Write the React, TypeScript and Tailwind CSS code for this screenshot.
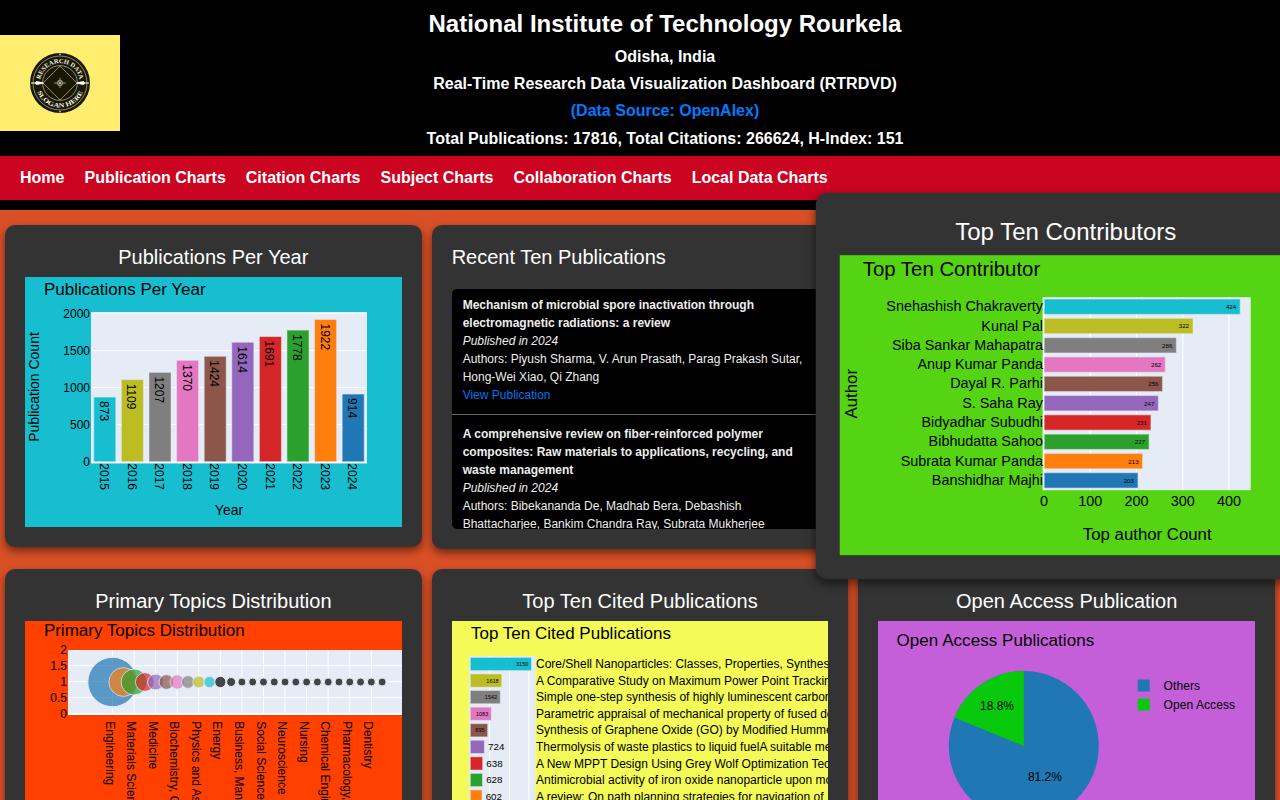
import React from "react";

const FONT = "'Liberation Sans', Arial, sans-serif";
const PALETTE = ["#17becf", "#bcbd22", "#7f7f7f", "#e377c2", "#8c564b", "#9467bd", "#d62728", "#2ca02c", "#ff7f0e", "#1f77b4"];

const YEARS = [873, 1109, 1207, 1370, 1424, 1614, 1691, 1778, 1922, 914];

const CONTRIBUTORS: [string, number][] = [
  ["Snehashish Chakraverty", 424],
  ["Kunal Pal", 322],
  ["Siba Sankar Mahapatra", 286],
  ["Anup Kumar Panda", 262],
  ["Dayal R. Parhi", 256],
  ["S. Saha Ray", 247],
  ["Bidyadhar Subudhi", 231],
  ["Bibhudatta Sahoo", 227],
  ["Subrata Kumar Panda", 213],
  ["Banshidhar Majhi", 203],
];

const TOPICS = [
  "Engineering",
  "Materials Science",
  "Medicine",
  "Biochemistry, Genetics",
  "Physics and Astronomy",
  "Energy",
  "Business, Management",
  "Social Sciences",
  "Neuroscience",
  "Nursing",
  "Chemical Engineering",
  "Pharmacology, Toxicology",
  "Dentistry",
];

const BUBBLES: [number, string][] = [
  [24.7, "#1f77b4"],
  [14.4, "#ff7f0e"],
  [13, "#2ca02c"],
  [9.4, "#d62728"],
  [8, "#9467bd"],
  [7.4, "#8c564b"],
  [7.2, "#e377c2"],
  [6.4, "#7f7f7f"],
  [6, "#bcbd22"],
  [5.7, "#17becf"],
  [5.6, "#111111"],
  [4.5, "#111111"],
];

const CITED: [string, number][] = [
  ["Core/Shell Nanoparticles: Classes, Properties, Synthesis", 3150],
  ["A Comparative Study on Maximum Power Point Tracking", 1618],
  ["Simple one-step synthesis of highly luminescent carbon", 1542],
  ["Parametric appraisal of mechanical property of fused deposition", 1083],
  ["Synthesis of Graphene Oxide (GO) by Modified Hummers", 895],
  ["Thermolysis of waste plastics to liquid fuelA suitable method", 724],
  ["A New MPPT Design Using Grey Wolf Optimization Technique", 638],
  ["Antimicrobial activity of iron oxide nanoparticle upon modulation", 628],
  ["A review: On path planning strategies for navigation of", 602],
];

function Logo() {
  return (
    <svg className="mt-[35px] block h-24 w-[120px] shrink-0 bg-[#ffee6f]" viewBox="0 35 120 96">
      <defs>
        <path id="arcTop" d="M 40.1 83 A 19.9 19.9 0 0 1 79.9 83" />
        <path id="arcBottom" d="M 35.5 83 A 24.5 24.5 0 0 0 84.5 83" />
      </defs>
      <circle cx="60" cy="83" r="30" fill="#1a1805" />
      <g fill="none" stroke="#d8d4b4" strokeWidth="0.6">
        <circle cx="60" cy="83" r="27" />
        <circle cx="60" cy="83" r="17.4" />
        <path d="M60 66 77 83 60 100 43 83Z" />
      </g>
      <path d="M31 82.4 35 82.4 36.5 81 43.5 82.5V83.5L36.5 85 35 83.6 31 83.6ZM76.5 82.5 83.5 81 85 82.4 89 82.4V83.6L85 83.6 83.5 85 76.5 83.5Z" fill="#fff" />
      <g fill="none" stroke="#d8d6c8" strokeWidth="0.6">
        <circle cx="60" cy="83" r="2.8" />
        <path d="M60 78V88M54 83H66M58 81 62 85M62 81 58 85" />
      </g>
      <g fill="#fff">
        <circle cx="60" cy="54.3" r="0.8" />
        <circle cx="60" cy="111.7" r="0.8" />
      </g>
      <g fill="#f6f2e2" fontFamily="'Liberation Serif', serif" fontWeight="700" fontSize="6.4" textAnchor="middle">
        <text>
          <textPath href="#arcTop" startOffset="50%" textLength="55" lengthAdjust="spacingAndGlyphs">RESEARCH DATA</textPath>
        </text>
        <text>
          <textPath href="#arcBottom" startOffset="50%" textLength="58" lengthAdjust="spacingAndGlyphs">SLOGAN HERE</textPath>
        </text>
      </g>
    </svg>
  );
}

function YearChart() {
  return (
    <svg className="block h-[250px] w-full bg-[#17becf]" viewBox="25 277 376.67 250" preserveAspectRatio="none" fontFamily={FONT} fontSize="12">
      <text x="43.9" y="295" fontSize="17" textLength="161.8">Publications Per Year</text>
      <rect x="91" y="312" width="276" height="151.5" fill="#e5ecf6" />
      {[0, 500, 1000, 1500, 2000].map((t) => (
        <g key={t}>
          <rect x="91" y={461.6 - t * 0.074 - (t === 0 ? 0.6 : 0.5)} width="276" height={t === 0 ? 2 : 1} fill="#fff" />
          <text x="90" y={465.9 - t * 0.074} textAnchor="end">{t}</text>
        </g>
      ))}
      {YEARS.map((v, i) => {
        const c = 104.8 + i * 27.6;
        const top = 461.7 - v * 0.074;
        return (
          <g key={i}>
            <rect x={c - 11} y={top} width="22" height={v * 0.074} fill={PALETTE[i]} stroke="#e5ecf6" strokeWidth="1" strokeOpacity="0.5" />
            <text transform={`translate(${c - 5} ${top + 4}) rotate(90)`}>{v}</text>
            <text transform={`translate(${c - 4.8} 463.3) rotate(90)`}>{2015 + i}</text>
          </g>
        );
      })}
      <text x="229" y="515" fontSize="14" textAnchor="middle">Year</text>
      <text transform="translate(39.3 387) rotate(-90)" fontSize="14" textAnchor="middle">Publication Count</text>
    </svg>
  );
}

function ContributorChart() {
  return (
    <svg className="block h-[250px] w-full bg-[#55d414]" viewBox="840 255 452 300" preserveAspectRatio="none" fontFamily={FONT} fontSize="14.4">
      <text x="863" y="276" fontSize="20.4">Top Ten Contributor</text>
      <rect x="1043" y="297" width="208" height="193" fill="#e5ecf6" />
      {[0, 100, 200, 300, 400].map((t) => (
        <g key={t}>
          <rect x={1044.3 + t * 0.4625 - (t === 0 ? 1.2 : 0.6)} y="297" width={t === 0 ? 2.4 : 1.2} height="193" fill="#fff" />
          <text x={1044.3 + t * 0.4625} y="506" textAnchor="middle">{t}</text>
        </g>
      ))}
      {CONTRIBUTORS.map(([name, v], i) => {
        const c = 306.5 + i * 19.3;
        return (
          <g key={name}>
            <rect x="1044.4" y={c - 7.7} width={v * 0.4625} height="15.4" fill={PALETTE[i]} stroke="#e5ecf6" strokeWidth="1.2" strokeOpacity="0.5" />
            <text x="1043.2" y={c + 4.6} textAnchor="end">{name}</text>
            <text x={1044.4 + v * 0.4625 - 4} y={c + 2.5} textAnchor="end" fontSize="6.2">{v}</text>
          </g>
        );
      })}
      <text x="1147.5" y="540" fontSize="16.8" textAnchor="middle">Top author Count</text>
      <text transform="translate(857.3 393.5) rotate(-90)" fontSize="16.8" textAnchor="middle">Author</text>
    </svg>
  );
}

function TopicsChart() {
  const dots: [number, string][] = Array.from({ length: 26 }, (_, i) => BUBBLES[i] ?? [4, "#111111"]);
  return (
    <svg className="block h-[250px] w-full bg-[#ff4000]" viewBox="25 621 376.67 250" preserveAspectRatio="none" fontFamily={FONT} fontSize="12">
      <text x="43.9" y="636.4" fontSize="17" textLength="200.8">Primary Topics Distribution</text>
      <rect x="68" y="650" width="334" height="65" fill="#e5ecf6" />
      {[0, 0.5, 1, 1.5, 2].map((t) => (
        <g key={t}>
          {t < 2 && <rect x="68" y={713.7 - t * 32 - (t === 0 ? 0.7 : 0.5)} width="334" height={t === 0 ? 2 : 1} fill="#fff" />}
          <text x="67" y={718.2 - t * 32} textAnchor="end">{t}</text>
        </g>
      ))}
      {TOPICS.map((name, i) => (
        <g key={name}>
          <rect x={112 + i * 21.57} y="650" width="1" height="65" fill="#fff" />
          <text transform={`translate(${105.6 + i * 21.57} 721.3) rotate(90)`}>{name}</text>
        </g>
      ))}
      {dots.map(([r, fill], i) => (
        <circle key={i} cx={112.5 + i * 10.785} cy="682" r={r} fill={fill} stroke="#e5ecf6" strokeWidth="1" opacity={i < 10 ? 0.7 : 0.77} />
      ))}
    </svg>
  );
}

function CitedChart() {
  return (
    <svg className="block h-[250px] w-full bg-[#f4fa58]" viewBox="452 621 376.67 250" preserveAspectRatio="none" fontFamily={FONT} fontSize="12">
      <text x="471" y="639.2" fontSize="17">Top Ten Cited Publications</text>
      <rect x="469" y="656" width="66.5" height="165" fill="#e5ecf6" />
      {[489.2, 509, 528.3].map((x) => (
        <rect key={x} x={x} y="656" width="1" height="165" fill="#fff" />
      ))}
      {CITED.map(([name, v], i) => {
        const c = 664 + i * 16.57;
        const w = v * 0.0194;
        const inside = v > 800;
        return (
          <g key={name}>
            <rect x="470.3" y={c - 6.6} width={w} height="13.2" fill={PALETTE[i]} stroke="#e5ecf6" strokeWidth="1" strokeOpacity="0.5" />
            {inside ? (
              <text x={470.3 + w - 3.1} y={c + 2} fontSize="5.5" textAnchor="end">{v}</text>
            ) : (
              <text x={470.3 + w + 3.7} y={c + 3.5} fontSize="9.8">{v}</text>
            )}
            <text x="536" y={c + 4.2}>{name}</text>
          </g>
        );
      })}
    </svg>
  );
}

function AccessChart() {
  return (
    <svg className="block h-[250px] w-full bg-[#c55fd9]" viewBox="878 621 376.67 250" preserveAspectRatio="none" fontFamily={FONT} fontSize="12">
      <text x="896.6" y="646" fontSize="17" textLength="197.6">Open Access Publications</text>
      <circle cx="1023.8" cy="746" r="75" fill="#1f77b4" />
      <path d="M1023.8 746 954.4 717.6A75 75 0 0 1 1023.8 671Z" fill="#08c90c" />
      <text x="997" y="710" textAnchor="middle">18.8%</text>
      <text x="1044.9" y="781" textAnchor="middle">81.2%</text>
      <rect x="1137.7" y="679.5" width="12" height="12" fill="#1f77b4" />
      <rect x="1137.7" y="698.5" width="12" height="12" fill="#08c90c" />
      <text x="1163.6" y="690" textLength="36.4">Others</text>
      <text x="1163.6" y="709" textLength="71.4">Open Access</text>
    </svg>
  );
}

function Card({ title, className = "", children }: { title: string; className?: string; children: React.ReactNode }) {
  return (
    <section className={`rounded-[10px] bg-[#333333] p-5 shadow-[0_4px_8px_rgba(0,0,0,0.5)] ${className}`}>
      <h2 className="mb-2 text-center text-xl leading-6">{title}</h2>
      {children}
    </section>
  );
}

function Publication({ title, authors }: { title: string; authors: string }) {
  return (
    <li className="border-b border-[#666] px-[11px] pb-2.5 pt-2.5">
      <p className="font-bold">{title}</p>
      <p className="italic">Published in 2024</p>
      <p>Authors: {authors}</p>
      <a className="text-[#0074f0]">View Publication</a>
    </li>
  );
}

export default function App() {
  const links = ["Home", "Publication Charts", "Citation Charts", "Subject Charts", "Collaboration Charts", "Local Data Charts"];
  return (
    <div className="h-[800px] overflow-hidden bg-[#d95027] font-['Liberation_Sans',Arial,sans-serif] text-white">
      <header className="bg-black pb-2.5">
        <div className="flex h-[156px]">
          <Logo />
          <div className="mr-[70px] flex-1 pt-[9px] text-center text-base font-bold leading-[27.2px]">
            <h1 className="mb-[5px] text-2xl leading-[29px]">National Institute of Technology Rourkela</h1>
            <p>Odisha, India</p>
            <p>Real-Time Research Data Visualization Dashboard (RTRDVD)</p>
            <p className="text-[#007bff]">(Data Source: OpenAlex)</p>
            <p>Total Publications: 17816, Total Citations: 266624, H-Index: 151</p>
          </div>
        </div>
        <nav className="flex h-11 items-center gap-5 bg-[#ca0421] px-5 font-bold">
          {links.map((l) => (
            <a key={l}>{l}</a>
          ))}
        </nav>
      </header>

      <main className="grid grid-cols-3 items-start gap-x-2.5 gap-y-5 px-[5px] pt-[15px]">
        <Card title="Publications Per Year">
          <YearChart />
        </Card>

        <section className="rounded-[10px] bg-[#333333] p-5 shadow-[0_4px_8px_rgba(0,0,0,0.5)]">
          <h2 className="mb-5 text-xl leading-6">Recent Ten Publications</h2>
          <div className="h-60 overflow-hidden rounded-[5px] bg-black text-xs leading-[18px] text-[#eee]">
            <ul className="-mt-[3px]">
              <Publication title="Mechanism of microbial spore inactivation through electromagnetic radiations: a review" authors="Piyush Sharma, V. Arun Prasath, Parag Prakash Sutar, Hong-Wei Xiao, Qi Zhang" />
              <Publication title="A comprehensive review on fiber-reinforced polymer composites: Raw materials to applications, recycling, and waste management" authors="Bibekananda De, Madhab Bera, Debashish Bhattacharjee, Bankim Chandra Ray, Subrata Mukherjee" />
            </ul>
          </div>
        </section>

        <Card title="Top Ten Contributors" className="relative z-10 -translate-x-[0.6px] scale-120">
          <ContributorChart />
        </Card>

        <Card title="Primary Topics Distribution">
          <TopicsChart />
        </Card>
        <Card title="Top Ten Cited Publications">
          <CitedChart />
        </Card>
        <Card title="Open Access Publication">
          <AccessChart />
        </Card>
      </main>
    </div>
  );
}
